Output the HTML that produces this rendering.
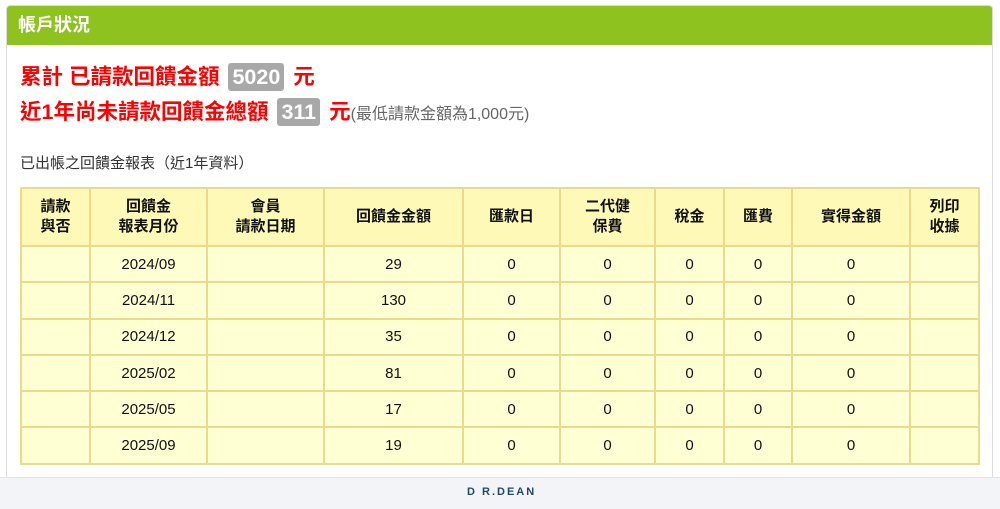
<!DOCTYPE html>
<html><head><meta charset="utf-8"><style>
body{margin:0;width:1000px;height:508px;background:#fff;font-family:"Liberation Sans","Noto Sans CJK TC",sans-serif;position:relative;overflow:hidden}
.card{position:absolute;left:6px;top:5px;width:985px;height:480px;border:1px solid #dcdcdc;border-radius:4px 4px 0 0;background:#fff}
.hd{height:39px;background:#8dc21f;border-radius:3px 3px 0 0;color:#fff;font-weight:bold;font-size:18px;line-height:39px;padding-left:11px}
.r{position:absolute;left:20px;color:#f00;font-weight:bold;font-size:21.5px;white-space:nowrap}
.b{display:inline-block;background:#a8a8a8;color:#fff;border-radius:3px;padding:0 4px;line-height:28px;margin:0 3px}
.g{color:#666;font-weight:normal;font-size:16px}
.sub{position:absolute;left:20px;top:152px;font-size:15px;color:#333}
table{position:absolute;left:20px;top:187px;border-collapse:collapse;width:958px;table-layout:fixed}
td,th{border:2px solid #ebd98e;text-align:center;font-size:15px;color:#111;padding:0}
th{background:#fff9b8;height:56px;font-weight:bold;line-height:20px}
td{background:#ffffd4;height:34.3px}
.ft{position:absolute;left:0;top:477px;width:1000px;height:31px;background:#f2f4f8;border-top:1px solid #e0e3ea}
.logo{position:absolute;left:467px;top:8px;font-size:11px;font-weight:bold;color:#1f4a6a;letter-spacing:2px}
</style></head><body>
<div class="card"><div class="hd">帳戶狀況</div></div>
<div class="r" style="top:60px">累計 已請款回饋金額 <span class="b">5020</span> 元</div>
<div class="r" style="top:95px">近1年尚未請款回饋金總額 <span class="b">311</span> 元<span class="g">(最低請款金額為1,000元)</span></div>
<div class="sub">已出帳之回饋金報表（近1年資料）</div>
<table>
<colgroup><col style="width:69px"><col style="width:117px"><col style="width:117px"><col style="width:139px"><col style="width:97px"><col style="width:95px"><col style="width:69px"><col style="width:68px"><col style="width:118px"><col style="width:69px"></colgroup>
<tr><th>請款<br>與否</th><th>回饋金<br>報表月份</th><th>會員<br>請款日期</th><th>回饋金金額</th><th>匯款日</th><th>二代健<br>保費</th><th>稅金</th><th>匯費</th><th>實得金額</th><th>列印<br>收據</th></tr>
<tr><td></td><td>2024/09</td><td></td><td>29</td><td>0</td><td>0</td><td>0</td><td>0</td><td>0</td><td></td></tr>
<tr><td></td><td>2024/11</td><td></td><td>130</td><td>0</td><td>0</td><td>0</td><td>0</td><td>0</td><td></td></tr>
<tr><td></td><td>2024/12</td><td></td><td>35</td><td>0</td><td>0</td><td>0</td><td>0</td><td>0</td><td></td></tr>
<tr><td></td><td>2025/02</td><td></td><td>81</td><td>0</td><td>0</td><td>0</td><td>0</td><td>0</td><td></td></tr>
<tr><td></td><td>2025/05</td><td></td><td>17</td><td>0</td><td>0</td><td>0</td><td>0</td><td>0</td><td></td></tr>
<tr><td></td><td>2025/09</td><td></td><td>19</td><td>0</td><td>0</td><td>0</td><td>0</td><td>0</td><td></td></tr>
</table>
<div class="ft"><div class="logo">D R.DEAN</div></div>
</body></html>
